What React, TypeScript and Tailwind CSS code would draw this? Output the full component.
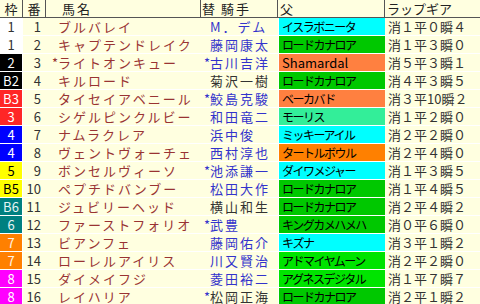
import React from "react";

// ─── Data ─────────────────────────────────────────────────────

type Row = {
  waku: string;
  frame: number;
  name: string;
  foreign?: boolean;
  jockey: string;
  change?: boolean;
  jockeyDark?: boolean;
  sire: string;
  sireBg: string;
  latin?: boolean;
  lap: string;
};

const FRAME_STYLE: Record<number, string> = {
  1: "bg-white text-[#333]",
  2: "bg-black text-white",
  3: "bg-[#FF2626] text-white",
  4: "bg-[#0000FF] text-white",
  5: "bg-[#FFFF00] text-black",
  6: "bg-[#008080] text-[#e6f4f4]",
  7: "bg-[#FF8000] text-[#fff4e6]",
  8: "bg-[#FF00FF] text-white",
};

const ROWS: Row[] = [
  { waku: "1", frame: 1, name: "ブルバレイ", jockey: "M．デム", sire: "イスラボニータ", sireBg: "bg-[#00FFFF]", lap: "消１平０瞬４" },
  { waku: "1", frame: 1, name: "キャプテンドレイク", jockey: "藤岡康太", sire: "ロードカナロア", sireBg: "bg-[#00C800]", lap: "消１平３瞬０" },
  { waku: "2", frame: 2, name: "ライトオンキュー", foreign: true, jockey: "古川吉洋", change: true, sire: "Shamardal", latin: true, sireBg: "bg-[#FF8040]", lap: "消５平３瞬１" },
  { waku: "B2", frame: 2, name: "キルロード", jockey: "菊沢一樹", jockeyDark: true, sire: "ロードカナロア", sireBg: "bg-[#00C800]", lap: "消４平３瞬５" },
  { waku: "B3", frame: 3, name: "タイセイアベニール", jockey: "鮫島克駿", change: true, sire: "ベーカバド", sireBg: "bg-[#FF8040]", lap: "消３平10瞬２" },
  { waku: "3", frame: 3, name: "シゲルピンクルビー", jockey: "和田竜二", sire: "モーリス", sireBg: "bg-[#33EE99]", lap: "消１平２瞬０" },
  { waku: "4", frame: 4, name: "ナムラクレア", jockey: "浜中俊", sire: "ミッキーアイル", sireBg: "bg-[#00FFFF]", lap: "消２平２瞬０" },
  { waku: "4", frame: 4, name: "ヴェントヴォーチェ", jockey: "西村淳也", sire: "タートルボウル", sireBg: "bg-[#FF8000]", lap: "消２平４瞬０" },
  { waku: "5", frame: 5, name: "ボンセルヴィーソ", jockey: "池添謙一", change: true, sire: "ダイワメジャー", sireBg: "bg-[#00FFFF]", lap: "消１平３瞬５" },
  { waku: "B5", frame: 5, name: "ペプチドバンブー", jockey: "松田大作", sire: "ロードカナロア", sireBg: "bg-[#00C800]", lap: "消１平４瞬５" },
  { waku: "B6", frame: 6, name: "ジュビリーヘッド", jockey: "横山和生", jockeyDark: true, sire: "ロードカナロア", sireBg: "bg-[#00C800]", lap: "消２平４瞬２" },
  { waku: "6", frame: 6, name: "ファーストフォリオ", jockey: "武豊", change: true, sire: "キングカメハメハ", sireBg: "bg-[#00C800]", lap: "消０平６瞬０" },
  { waku: "7", frame: 7, name: "ビアンフェ", jockey: "藤岡佑介", sire: "キズナ", sireBg: "bg-[#00FFFF]", lap: "消３平１瞬２" },
  { waku: "7", frame: 7, name: "ローレルアイリス", jockey: "川又賢治", sire: "アドマイヤムーン", sireBg: "bg-[#00E400]", lap: "消２平２瞬０" },
  { waku: "8", frame: 8, name: "ダイメイフジ", jockey: "菱田裕二", sire: "アグネスデジタル", sireBg: "bg-[#00E400]", lap: "消１平７瞬７" },
  { waku: "8", frame: 8, name: "レイハリア", jockey: "松岡正海", change: true, jockeyDark: true, sire: "ロードカナロア", sireBg: "bg-[#00C800]", lap: "消２平１瞬２" },
];

// ─── Page ─────────────────────────────────────────────────────

export default function App() {
  return (
    <div
      className="w-[480px] h-[304px] overflow-hidden bg-[#FFFFE0] text-[#333] text-[13px] leading-[17px]"
      style={{ fontFamily: '"Noto Sans CJK JP", "Noto Sans", sans-serif' }}
    >
      {/* ── Header ── */}
      <div className="flex h-[18px] border-b border-[#555] text-[#222]">
        <div className="w-[23px] border-r border-[#555] text-center">枠</div>
        <div className="w-[23px] border-r border-[#555] text-center">番</div>
        <div className="w-[155px] border-r border-[#555] pl-[16px] tracking-[2px]">馬名</div>
        <div className="w-[77px] border-r border-[#555] pl-[1px] tracking-[2px]">
          替<span className="ml-[4px]">騎手</span>
        </div>
        <div className="w-[107px] border-r border-[#555] pl-[2px]">父</div>
        <div className="flex-1 pl-[2px]">ラップギア</div>
      </div>

      {/* ── Rows ── */}
      {ROWS.map((r, i) => (
        <div key={i} className="flex h-[18px] border-b border-white">
          <div className={`w-[23px] border-r border-white text-center ${FRAME_STYLE[r.frame]}`}>
            {r.waku}
          </div>
          <div className="w-[23px] text-right pr-[5px] text-[#333]">{i + 1}</div>
          <div className="w-[155px] flex whitespace-nowrap overflow-hidden text-[#993333]">
            <span className="w-[12px] shrink-0 text-right">{r.foreign ? "*" : ""}</span>
            <span className="tracking-[2px]">{r.name}</span>
          </div>
          <div className="w-[77px] flex whitespace-nowrap overflow-hidden">
            <span className="w-[9px] shrink-0 text-right text-[#3333CC]">{r.change ? "*" : ""}</span>
            <span className={`tracking-[2px] ${r.jockeyDark ? "text-[#333]" : "text-[#3333CC]"}`}>
              {r.jockey}
            </span>
          </div>
          <div
            className={`w-[107px] border-l border-white pl-[3px] text-black whitespace-nowrap overflow-hidden ${
              r.latin ? "text-[13px]" : "text-[12px] tracking-[-1.5px]"
            } ${r.sireBg}`}
          >
            {r.sire}
          </div>
          <div className="flex-1 pl-[3px] whitespace-nowrap">{r.lap}</div>
        </div>
      ))}
    </div>
  );
}
